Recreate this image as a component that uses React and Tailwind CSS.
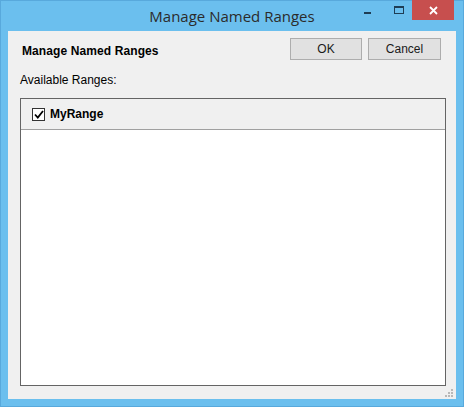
export default function App() {
  const ui = { fontFamily: '"Liberation Sans", Arial, sans-serif' };
  return (
    <div
      className="w-[464px] h-[407px] bg-[#6bbfee] border border-[#58a9dc] flex flex-col"
      style={ui}
    >
      {/* Title bar */}
      <div className="relative h-[30px] flex items-center justify-center">
        <span
          className="text-[15px] text-[#2b2b2b] mt-[1px]"
          style={{ fontFamily: '"Open Sans", "Noto Sans", sans-serif' }}
        >
          Manage Named Ranges
        </span>
        <div className="absolute right-[9px] top-[-1px] flex items-start">
          <div className="w-[26px] h-[20px] flex items-center justify-start pl-[4px]">
            <div className="w-[7px] h-[2px] bg-[#1e3d55] mt-[5px]" />
          </div>
          <div className="w-[26px] h-[20px] flex items-center justify-center">
            <div className="w-[10px] h-[8px] border border-[#1e3d55] border-t-2" />
          </div>
          <div className="w-[42px] h-[20px] bg-[#c74f4e] flex items-center justify-center">
            <svg width="9" height="9" viewBox="0 0 9 9">
              <path d="M1 1 L8 8 M8 1 L1 8" stroke="#fff" strokeWidth="1.8" />
            </svg>
          </div>
        </div>
      </div>

      {/* Client area */}
      <div className="flex-1 mx-[7px] mb-[7px] bg-[#f0f0f0] flex flex-col relative">
        <div className="flex items-center justify-between pl-[14px] pr-[15px] pt-[7px]">
          <span className="text-[12px] font-bold text-black mt-[3px] tracking-[0.1px]">
            Manage Named Ranges
          </span>
          <div className="flex gap-[6px]">
            <button className="w-[72px] h-[22px] bg-[#e1e1e1] border border-[#adadad] text-[12px] text-[#1a1a1a]">
              OK
            </button>
            <button className="w-[73px] h-[22px] bg-[#e1e1e1] border border-[#adadad] text-[12px] text-[#1a1a1a]">
              Cancel
            </button>
          </div>
        </div>

        <div className="pl-[12px] mt-[11px] text-[12px] text-black">Available Ranges:</div>

        <div className="flex-1 ml-[12px] mr-[10px] mt-[9px] mb-[13px] bg-white border border-[#646464] flex flex-col">
          <div className="h-[31px] bg-[#f0f0f0] border-b border-[#a0a0a0] flex items-center pl-[11px] gap-[5px]">
            <div className="w-[13px] h-[13px] border border-[#333] bg-white flex items-center justify-center">
              <svg width="10" height="9" viewBox="0 0 10 9">
                <path d="M1 4.5 L3.8 7.5 L9 1" fill="none" stroke="#000" strokeWidth="1.8" />
              </svg>
            </div>
            <span className="text-[12px] font-bold text-black">MyRange</span>
          </div>
        </div>

        {/* Resize grip */}
        <div className="absolute right-[3px] bottom-[2px] grid grid-cols-3 gap-[1px] w-[8px] h-[8px]">
          <div />
          <div />
          <div className="w-[2px] h-[2px] bg-[#b8b8b8]" />
          <div />
          <div className="w-[2px] h-[2px] bg-[#b8b8b8]" />
          <div className="w-[2px] h-[2px] bg-[#b8b8b8]" />
          <div className="w-[2px] h-[2px] bg-[#b8b8b8]" />
          <div className="w-[2px] h-[2px] bg-[#b8b8b8]" />
          <div className="w-[2px] h-[2px] bg-[#b8b8b8]" />
        </div>
      </div>
    </div>
  );
}
